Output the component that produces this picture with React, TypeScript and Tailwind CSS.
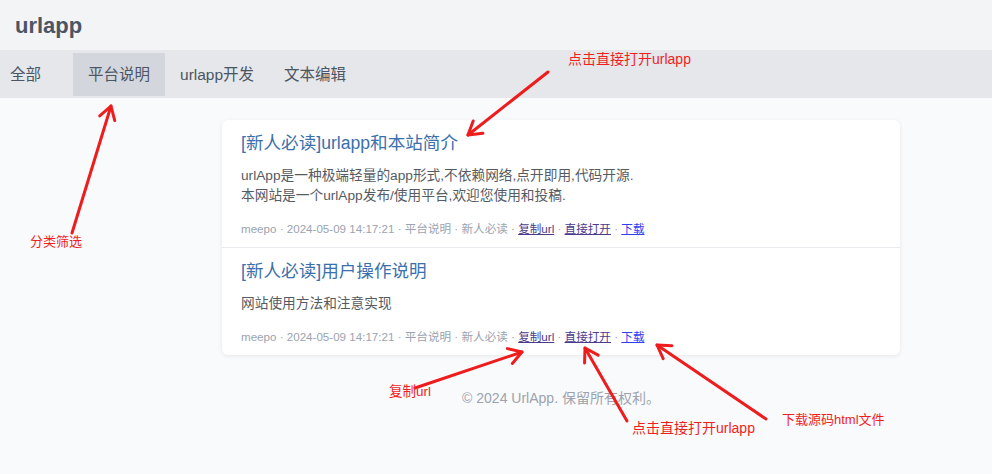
import React from "react";

type Post = {
  title: string;
  lines: string[];
  author: string;
  time: string;
  category: string;
  tag: string;
};

const posts: Post[] = [
  {
    title: "[新人必读]urlapp和本站简介",
    lines: [
      "urlApp是一种极端轻量的app形式,不依赖网络,点开即用,代码开源.",
      "本网站是一个urlApp发布/使用平台,欢迎您使用和投稿.",
    ],
    author: "meepo",
    time: "2024-05-09 14:17:21",
    category: "平台说明",
    tag: "新人必读",
  },
  {
    title: "[新人必读]用户操作说明",
    lines: ["网站使用方法和注意实现"],
    author: "meepo",
    time: "2024-05-09 14:17:21",
    category: "平台说明",
    tag: "新人必读",
  },
];

const tabs = ["平台说明", "urlapp开发", "文本编辑"];

// annotation arrows: tail -> tip
const arrows = [
  { x1: 548, y1: 72, x2: 468, y2: 135 },
  { x1: 72, y1: 233, x2: 111, y2: 106 },
  { x1: 415, y1: 388, x2: 522, y2: 352 },
  { x1: 627, y1: 421, x2: 585, y2: 348 },
  { x1: 766, y1: 419, x2: 657, y2: 345 },
];

function Arrow({ x1, y1, x2, y2 }: { x1: number; y1: number; x2: number; y2: number }) {
  const a = Math.atan2(y2 - y1, x2 - x1);
  const len = 15;
  const p1 = [x2 - len * Math.cos(a - 0.55), y2 - len * Math.sin(a - 0.55)];
  const p2 = [x2 - len * Math.cos(a + 0.55), y2 - len * Math.sin(a + 0.55)];
  return (
    <g stroke="#ee1c1c" strokeWidth={3} strokeLinecap="round" strokeLinejoin="round" fill="none">
      <line x1={x1} y1={y1} x2={x2} y2={y2} />
      <polyline points={`${p1[0]},${p1[1]} ${x2},${y2} ${p2[0]},${p2[1]}`} />
    </g>
  );
}

function PostItem({ post, last }: { post: Post; last: boolean }) {
  return (
    <div className={`px-[19px] pt-[11px] pb-[10px] ${last ? "" : "border-b border-[#e8eaed]"}`}>
      <a className="block text-[17.6px] leading-6 text-[#3a70ad]">{post.title}</a>
      <div className="mt-[11px] text-[13.7px] leading-5 text-[#555b63]">
        {post.lines.map((l) => (
          <p key={l}>{l}</p>
        ))}
      </div>
      <div className="mt-[15px] text-[11.6px] leading-4 text-[#9ca3af]">
        {post.author} · {post.time} · {post.category} · {post.tag} ·{" "}
        <a className="underline text-[#4a3b8c]">复制url</a> ·{" "}
        <a className="underline text-[#4a3b8c]">直接打开</a> ·{" "}
        <a className="underline text-[#2f3ff0]">下载</a>
      </div>
    </div>
  );
}

export default function App() {
  return (
    <div className="relative min-h-[474px] bg-[#f9fafb] font-['Liberation_Sans','Noto_Sans_CJK_SC',sans-serif]">
      <header className="h-[50px] bg-[#f3f4f6] flex items-center px-[15px]">
        <h1 className="text-[22px] font-bold text-[#4b5563]">urlapp</h1>
      </header>

      <nav className="h-[48px] bg-[#e5e7eb] flex items-start pt-[3px] text-[15.5px] text-[#4b5563]">
        <a className="h-[43px] w-[73px] pl-[10px] flex items-center">全部</a>
        {tabs.map((t, i) => (
          <a
            key={t}
            className={`h-[43px] px-[15px] flex items-center ${i === 0 ? "bg-[#d3d7dd]" : ""}`}
          >
            {t}
          </a>
        ))}
      </nav>

      <main className="ml-[222px] w-[678px] pt-[22px]">
        <div className="bg-white rounded-md shadow-[0_1px_4px_rgba(0,0,0,0.08)]">
          {posts.map((p, i) => (
            <PostItem key={p.title} post={p} last={i === posts.length - 1} />
          ))}
        </div>
        <footer className="mt-[33px] text-center text-[14px] leading-5 text-[#9ca3af]">
          © 2024 UrlApp. 保留所有权利。
        </footer>
      </main>

      {/* annotations */}
      <svg className="absolute inset-0 pointer-events-none" width={992} height={474}>
        {arrows.map((a, i) => (
          <Arrow key={i} {...a} />
        ))}
      </svg>
      <span className="absolute left-[568px] top-[49px] text-[14px] leading-5 text-[#f01e1e]">点击直接打开urlapp</span>
      <span className="absolute left-[30px] top-[232px] text-[13px] leading-5 text-[#f01e1e]">分类筛选</span>
      <span className="absolute left-[389px] top-[382px] text-[13.5px] leading-5 text-[#f01e1e]">复制url</span>
      <span className="absolute left-[632px] top-[418px] text-[14px] leading-5 text-[#f01e1e]">点击直接打开urlapp</span>
      <span className="absolute left-[782px] top-[410px] text-[13px] leading-5 text-[#f01e1e]">下载源码html文件</span>
    </div>
  );
}
